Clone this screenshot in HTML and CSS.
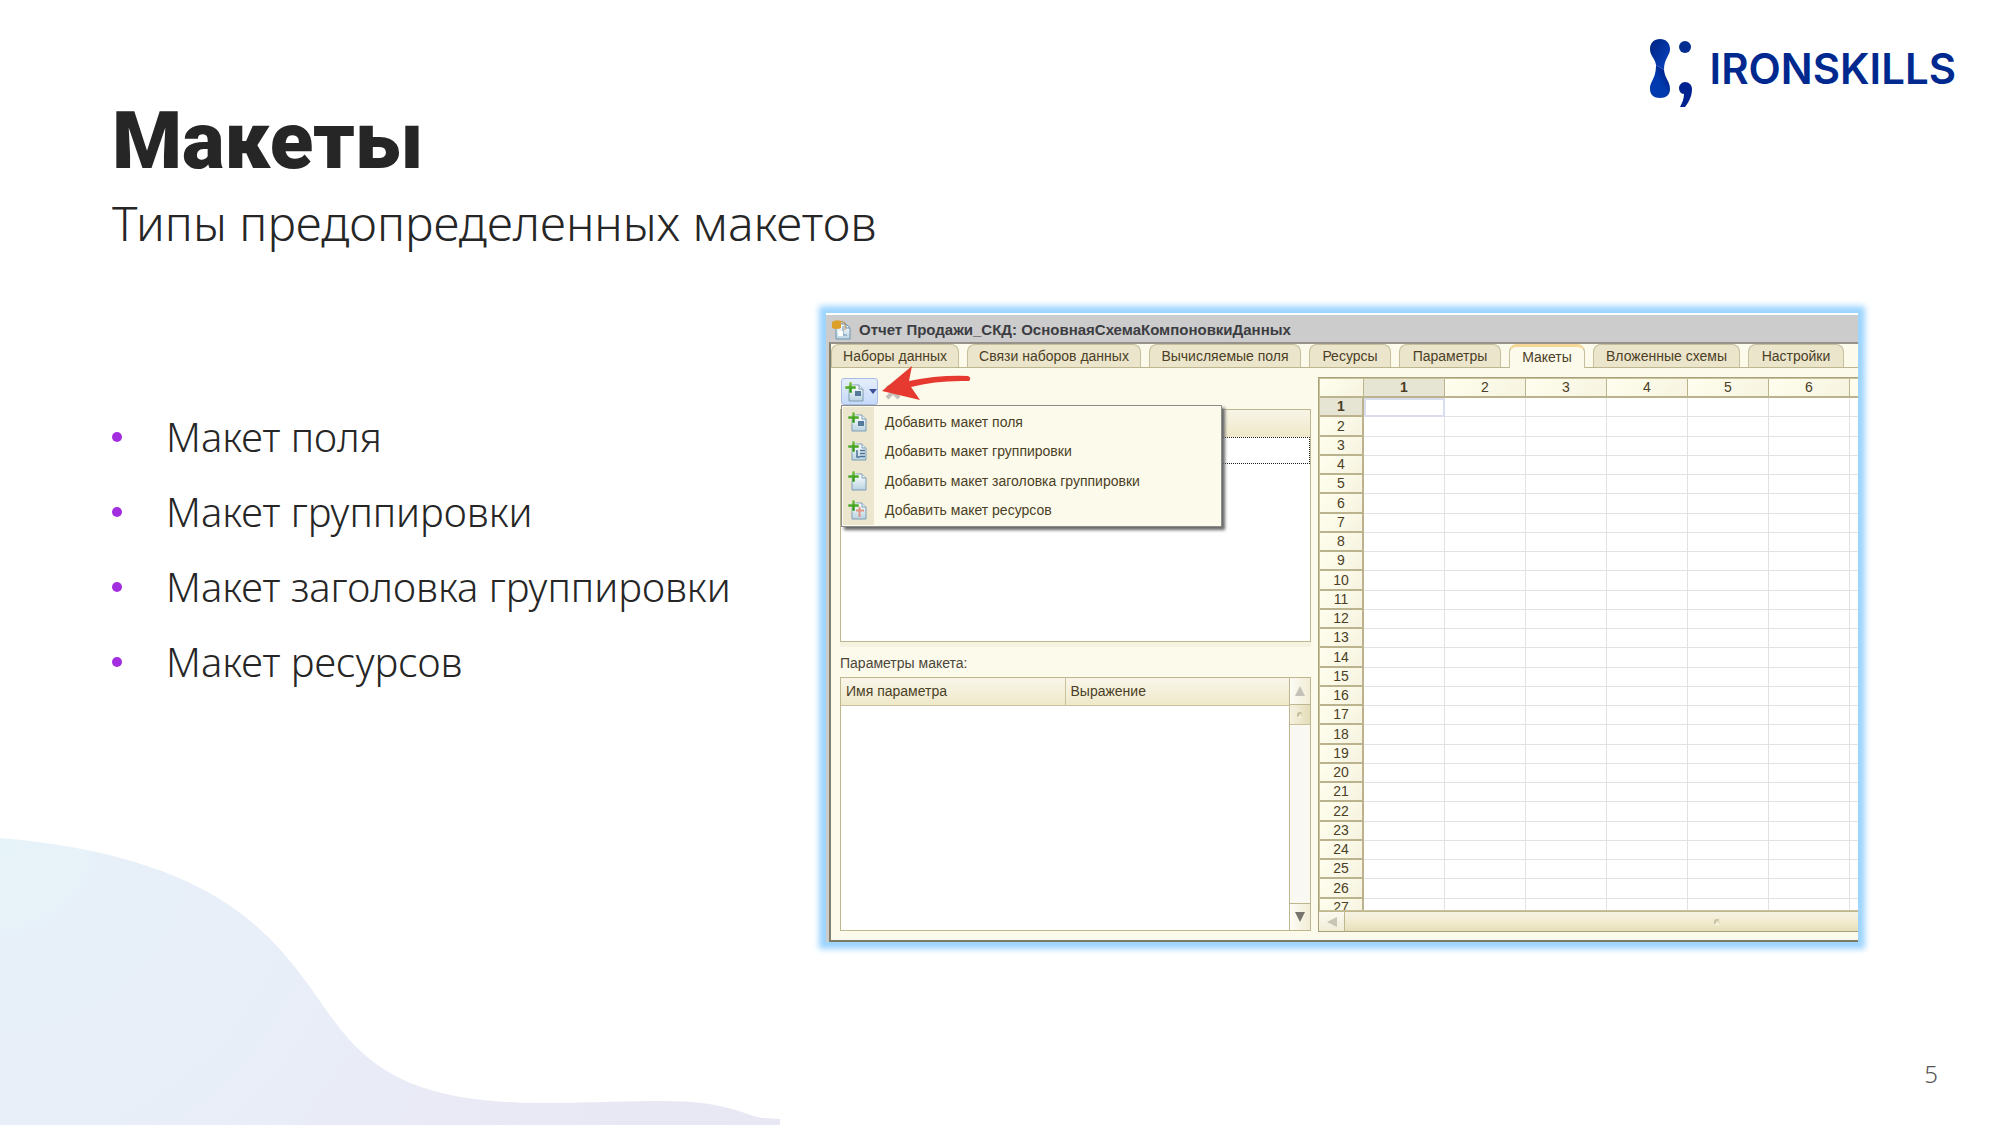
FILE: index.html
```html
<!DOCTYPE html>
<html lang="ru">
<head>
<meta charset="utf-8">
<title>Макеты</title>
<link rel="stylesheet" href="styles.css">
</head>
<body>
<svg width="0" height="0" class="defs" aria-hidden="true">
  <defs>
    <linearGradient id="sheet" x1="0" y1="0" x2="0" y2="1"><stop offset="0" stop-color="#fff"/><stop offset="1" stop-color="#b9d3e2"/></linearGradient>
    <linearGradient id="plus" x1="0" y1="0" x2="0" y2="1"><stop offset="0" stop-color="#7cc242"/><stop offset="1" stop-color="#1c8a12"/></linearGradient>
    <symbol id="page" viewBox="0 0 20 20">
      <path d="M4 3h10l4 4v12h-14z" fill="url(#sheet)" stroke="#7f9db4"/>
      <path d="M14 3v4h4" fill="#e6f0f6" stroke="#7f9db4"/>
    </symbol>
    <symbol id="add" viewBox="0 0 20 20">
      <path d="M4 0h3v4h4v3h-4v4h-3v-4h-4v-3h4z" fill="url(#plus)" stroke="#eef5e4" stroke-width=".5"/>
    </symbol>
  </defs>
</svg>
<div class="slide">
  <svg class="wave" viewBox="0 0 780 287" aria-hidden="true">
    <defs><radialGradient id="tint" gradientUnits="userSpaceOnUse" cx="0" cy="0" r="780">
      <stop offset="0" stop-color="#e6f3f8"/><stop offset=".11" stop-color="#e7f2f9"/><stop offset=".14" stop-color="#e7eff9"/><stop offset=".35" stop-color="#e8eff9"/><stop offset=".5" stop-color="#e9edf7"/><stop offset=".65" stop-color="#e9eaf6"/><stop offset="1" stop-color="#e8e7f4"/>
    </radialGradient></defs>
    <path fill="url(#tint)" d="M0 0C120 10 195 40 243 77C290 114 313 155 335 184C375 238 425 264 538 265C590 265 620 263 660 263C730 262 748 280 765 280L780 281V287H0Z"/>
  </svg>

  <header class="top">
    <div class="heading">
      <h1>Макеты</h1>
      <p>Типы предопределенных макетов</p>
    </div>
    <div class="brand">
      <svg width="44" height="70" viewBox="0 0 44 70" aria-hidden="true">
        <defs>
          <linearGradient id="g1" x1="0" y1="0" x2="1" y2="1"><stop offset="0" stop-color="#00237f"/><stop offset="1" stop-color="#0a45c4"/></linearGradient>
          <linearGradient id="g2" x1="1" y1="0" x2="0" y2="1"><stop offset="0" stop-color="#00106e"/><stop offset=".5" stop-color="#003aae"/><stop offset="1" stop-color="#003aae"/></linearGradient>
        </defs>
        <path d="M11 0C17 0 21 4 21 10C21 17 15 19 15 31L7 26C6 19 1 17 1 10C1 4 5 0 11 0Z" fill="url(#g1)"/>
        <path d="M7 26L15 31C16 40 21 42 21 50C21 56 17 59 11 59C5 59 1 56 1 50C1 42 7 40 7 26Z" fill="url(#g2)"/>
        <circle cx="36" cy="8" r="6" fill="#012c90"/>
        <path d="M36 43C40 43 43 46 43 50C43 58 39 64 36 68H31C33 64 35 60 35 55C32 55 30 52 30 49C30 46 33 43 36 43Z" fill="#002390"/>
      </svg>
      <span>IRONSKILLS</span>
    </div>
  </header>

  <main class="content">
    <ul class="types">
      <li>Макет поля</li>
      <li>Макет группировки</li>
      <li>Макет заголовка группировки</li>
      <li>Макет ресурсов</li>
    </ul>

    <section class="window">
      <div class="titlebar">
        <svg width="20" height="20" viewBox="0 0 20 20" aria-hidden="true">
          <path d="M4 4h10l4 4v11h-14z" fill="url(#sheet)" stroke="#6f93ad"/>
          <path d="M14 4v4h4M11 6v9h4" fill="none" stroke="#6f93ad"/>
          <rect x="6" y="11" width="5" height="5" fill="#fff"/>
          <path d="M0 2Q4-1 9 1V8Q5 10 0 8Z" fill="#dca02a"/><path d="M9 1l4 2v7" fill="none" stroke="#b98a45"/>
        </svg>
        <h2>Отчет Продажи_СКД: ОсновнаяСхемаКомпоновкиДанных</h2>
      </div>
      <div class="frame">
        <nav class="tabs">
          <button type="button" class="tab-sources">Наборы данных</button>
          <button type="button" class="tab-links">Связи наборов данных</button>
          <button type="button" class="tab-fields">Вычисляемые поля</button>
          <button type="button" class="tab-resources">Ресурсы</button>
          <button type="button" class="tab-params">Параметры</button>
          <button type="button" class="tab-layouts active">Макеты</button>
          <button type="button" class="tab-nested">Вложенные схемы</button>
          <button type="button" class="tab-settings">Настройки</button>
        </nav>
        <div class="work">
          <div class="left">
            <div class="toolbar">
              <button type="button" class="addbtn" aria-label="Добавить">
                <svg width="20" height="20" viewBox="0 0 20 20"><use href="#page"/><rect x="10" y="9" width="6" height="5" fill="#557a99"/><use href="#add"/></svg>
                <svg width="8" height="5" viewBox="0 0 8 5"><path d="M0 0h8l-4 5z" fill="#3c4f9b"/></svg>
              </button>
              <svg class="del" width="16" height="16" viewBox="0 0 16 16" aria-hidden="true"><path d="M2 2l12 12M14 2l-12 12" stroke="#c5bdb9" stroke-width="4"/></svg>
              <svg class="arrow" width="90" height="36" viewBox="0 0 90 36" aria-hidden="true"><path d="M0 25L30 0L27 15Q55 9 86 10Q90 12 87 15Q55 14 29 21L38 34Z" fill="#e63a30"/></svg>
              <ul class="menu">
                <li><svg width="20" height="20" viewBox="0 0 20 20"><use href="#page"/><rect x="10" y="9" width="6" height="5" fill="#557a99"/><use href="#add"/></svg><button type="button">Добавить макет поля</button></li>
                <li><svg width="20" height="20" viewBox="0 0 20 20"><use href="#page"/><path d="M9 9v7h3M12 9.500h5M12 12.500h5M12 15.500h5" fill="none" stroke="#4c7396" stroke-width="1.500"/><use href="#add"/></svg><button type="button">Добавить макет группировки</button></li>
                <li><svg width="20" height="20" viewBox="0 0 20 20"><use href="#page"/><use href="#add"/></svg><button type="button">Добавить макет заголовка группировки</button></li>
                <li><svg width="20" height="20" viewBox="0 0 20 20"><use href="#page"/><path d="M11.500 7v10M8 10.500h8" stroke="#e29484" stroke-width="2"/><use href="#add"/></svg><button type="button">Добавить макет ресурсов</button></li>
              </ul>
            </div>
            <div class="list"><div class="listhead"></div><div class="selected"></div></div>
            <p class="label" id="params">Параметры макета:</p>
            <div class="params">
              <table aria-labelledby="params"><thead><tr><th>Имя параметра</th><th>Выражение</th></tr></thead></table>
              <div class="vscroll">
                <button type="button" aria-label="Вверх"><svg width="10" height="10" viewBox="0 0 10 10"><path d="M5 0l5 10h-10z" fill="#c3c1b8"/></svg></button>
                <span class="thumb"><i></i></span>
                <button type="button" aria-label="Вниз" class="down"><svg width="10" height="10" viewBox="0 0 10 10"><path d="M0 0h10l-5 10z" fill="#77756e"/></svg></button>
              </div>
            </div>
          </div>
          <div class="sheet">
            <div class="cells">
              <table>
                <colgroup><col class="rowhead"><col><col><col><col><col><col><col></colgroup>
                <thead><tr><th></th><th class="on">1</th><th>2</th><th>3</th><th>4</th><th>5</th><th>6</th><th></th></tr></thead>
                <tbody id="rows"></tbody>
              </table>
            </div>
            <div class="hscroll">
              <button type="button" aria-label="Влево"><svg width="10" height="10" viewBox="0 0 10 10"><path d="M10 0v10l-10-5z" fill="#c8c5b4"/></svg></button>
              <span class="track"><i></i></span>
            </div>
          </div>
        </div>
      </div>
    </section>
  </main>
  <footer>5</footer>
</div>
<script src="rows.js"></script>
</body>
</html>
```
FILE: rows.js
```js
const body = document.getElementById('rows');
for (let n = 1; n <= 27; n++) {
  const row = body.insertRow();
  const head = document.createElement('th');
  head.textContent = n;
  if (n === 1) head.className = 'on';
  row.append(head);
  for (let c = 0; c < 7; c++) row.insertCell();
  if (n === 1) row.cells[1].className = 'cursor';
}
```
FILE: styles.css
```css
* { box-sizing: border-box; }
body { margin: 0; background: #fff; color: #262626; font-family: "Noto Sans", sans-serif; }
button { font: inherit; color: inherit; margin: 0; padding: 0; border: 0; background: none; }
h1, h2, p, ul { margin: 0; padding: 0; }
ul { list-style: none; }
svg { display: block; flex: none; }
.defs { position: absolute; }

.slide { position: relative; display: flex; flex-direction: column; min-height: 100vh; overflow: hidden; }
.wave { position: absolute; left: 0; bottom: 0; width: 39%; z-index: -1; }

.top { display: flex; justify-content: space-between; align-items: flex-start; padding: 39px 44px 0 112px; }
.heading { padding-top: 54px; }
h1 { font: 900 80px/96px Roboto, sans-serif; }
.heading p { font-size: 48px; font-weight: 300; line-height: 60px; margin-top: 4px; }
.brand { display: flex; gap: 17px; align-items: flex-start; color: #00298f; font: 600 42px/60px Inter, sans-serif; }

.content { display: flex; justify-content: space-between; gap: 48px; padding: 60px 142px 0 112px; }
.types { flex: none; padding-top: 86px; font-size: 40px; font-weight: 300; line-height: 75px; }
.types li { display: flex; align-items: center; gap: 44px; }
.types li::before { content: ""; width: 10px; height: 10px; border-radius: 50%; background: #a32ee0; }

.window { flex: 0 1 1032px; min-width: 0; display: flex; flex-direction: column; border-top: 2px solid #fff; background: #ccc; padding-left: 3px; color: #4b3f26; font: 14px/20px "Liberation Sans", sans-serif; box-shadow: 0 0 6px 7px #9cd5ff; }
.titlebar { display: flex; align-items: center; gap: 7px; height: 27px; padding: 3px 3px 0; }
h2 { font-size: 15px; line-height: 20px; font-weight: 700; color: #3c3d42; white-space: nowrap; }
.frame { border-top: 2px solid #96928a; border-left: 2px solid #827e6c; border-bottom: 2px solid #7c7964; background: #fcfaea; overflow: hidden; }

.tabs { display: flex; gap: 8px; height: 24px; border-bottom: 1px solid #bdb68f; }
.tabs button { flex: none; height: 23px; border: 1px solid #c6bf9d; border-bottom: 0; border-radius: 8px 8px 0 0; background: #ebe5cc; white-space: nowrap; }
.tabs .active { height: 24px; background: #fcfaea; border-top: 3px solid #f6d795; padding-bottom: 2px; }
.tab-sources { width: 128px; }
.tab-links { width: 174px; }
.tab-fields { width: 152px; }
.tab-resources { width: 82px; }
.tab-params { width: 102px; }
.tab-layouts { width: 76px; }
.tab-nested { width: 147px; }
.tab-settings { width: 96px; }

.work { display: flex; gap: 7px; padding: 9px 0 8px 9px; }
.left { flex: none; width: 471px; display: flex; flex-direction: column; }
.toolbar { position: relative; display: flex; align-items: flex-start; gap: 7px; height: 32px; padding: 1px; }
.addbtn { display: flex; align-items: center; gap: 4px; width: 37px; height: 27px; padding: 0 3px; border: 1px solid #a9bce6; border-radius: 3px; background: linear-gradient(#e5eefc, #c6dafa); }
.del { margin-top: 6px; }
.arrow { position: absolute; left: 42px; top: -11px; z-index: 3; }
.menu { position: absolute; left: 1px; top: 28px; z-index: 2; width: 381px; height: 122px; padding: 1px; border: 1px solid #8c8c8c; background: linear-gradient(90deg, #ebe6cd 31px, #fcfaea 31px) content-box, #fcfaea; box-shadow: 3px 3px 3px #666; display: grid; grid-auto-rows: 1fr; }
.menu li { display: flex; align-items: center; gap: 17px; padding-left: 5px; }
.list { height: 233px; border: 1px solid #bdb68f; background: #fff; }
.listhead { height: 27px; background: linear-gradient(#f8f5e6, #efe8ca); }
.selected { height: 27px; border: 1px dotted #222; }
.label { border-top: 5px solid #f5f2df; padding: 6px 0 4px; height: 35px; color: #4b463a; }
.params { display: flex; height: 254px; border: 1px solid #bdb68f; background: #fff; }
.params table { flex: 1; width: 100%; min-width: 0; align-self: flex-start; table-layout: fixed; border-collapse: collapse; }
.params th { height: 27px; padding: 0 5px; text-align: left; font-weight: 400; border-bottom: 1px solid #c9c19b; background: linear-gradient(#f9f6e9, #efe8ca); }
.params th + th { border-left: 1px solid #c9c19b; }
.vscroll { flex: none; width: 21px; display: flex; flex-direction: column; border-left: 1px solid #bdb68f; background: #f9f8f3; }
.vscroll button { display: grid; place-items: center; height: 27px; border-bottom: 1px solid #bdb68f; background: linear-gradient(90deg, #fdfcf5, #f0ecd6); }
.vscroll .down { margin-top: auto; border-top: 1px solid #bdb68f; border-bottom: 0; }
.thumb { display: grid; place-items: center; height: 20px; border-bottom: 1px solid #c9c19b; background: linear-gradient(90deg, #f6f2e0, #e4ddb9); }
i { width: 6px; height: 6px; border: 2px solid #c6c09f; border-right-color: #e5dfc4; border-bottom-color: #f7f4e4; border-radius: 50%; }

.sheet { flex: 1; min-width: 0; display: flex; flex-direction: column; border: 1px solid #a8a17a; border-right: 0; }
.cells { height: 533px; overflow: hidden; border: 1px solid #c9c19b; border-right: 0; }
.cells table { width: 611px; table-layout: fixed; border-collapse: separate; border-spacing: 0; background: #fff; }
.rowhead { width: 44px; }
.cells tr { height: 19px; }
.cells tbody tr:nth-child(4n + 2) { height: 20px; }
.cells td { padding: 0; border-right: 1px solid #e2e2e2; border-bottom: 1px solid #e2e2e2; }
.cells th { padding: 0; font-weight: 400; line-height: 17px; border-right: 2px solid #bab38d; border-bottom: 2px solid #bab38d; background: linear-gradient(135deg, #fffeee, #f6f3e0); }
.cells thead th { border-right-width: 1px; }
.cells .on { font-weight: 700; background: #e6e4d3; }
.cells td.cursor { border: 2px solid #d9dded; }
.hscroll { display: flex; height: 20px; border-top: 1px solid #bdb68f; background: linear-gradient(#f6f3e4, #f0eacb 60%, #e6dfbb); }
.hscroll button { display: grid; place-items: center; width: 26px; border-right: 1px solid #bdb68f; background: linear-gradient(#fbf9f0, #f0ecd6); }
.track { flex: 1; display: grid; place-items: center; padding-left: 230px; }

footer { margin-top: auto; padding: 0 62px 35px; text-align: right; color: #555; font-size: 24px; font-weight: 300; line-height: 32px; }
```
